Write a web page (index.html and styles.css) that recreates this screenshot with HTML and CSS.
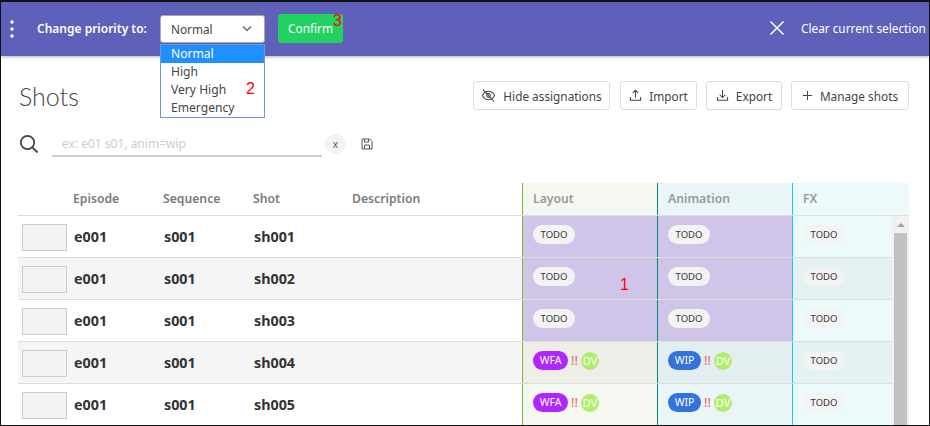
FILE: index.html
```html
<!DOCTYPE html>
<html lang="en">
<head>
  <meta charset="UTF-8">
  <title>Shots</title>
  <link rel="stylesheet" href="styles.css">
</head>
<body>
<div class="page">

  <div class="action-bar">
    <svg class="dots" width="6" height="20" viewBox="0 0 6 20"><circle cx="3" cy="3" r="1.7"/><circle cx="3" cy="10" r="1.7"/><circle cx="3" cy="17" r="1.7"/></svg>
    <strong class="bar-label">Change priority to:</strong>
    <div class="select">
      <span>Normal</span>
      <svg width="10" height="7" viewBox="0 0 10 7"><path d="M1 1.500 5 5.500l4-4" fill="none" stroke="#555" stroke-width="1.100"/></svg>
    </div>
    <div class="confirm">Confirm</div>
    <svg class="close-icon" width="16" height="16" viewBox="0 0 16 16"><path d="M1.500 1.500l13 13M14.500 1.500l-13 13" stroke="#fff" stroke-width="1.500" fill="none"/></svg>
    <span class="clear">Clear current selection</span>
  </div>

  <ul class="options">
    <li class="selected">Normal</li>
    <li>High</li>
    <li>Very High</li>
    <li>Emergency</li>
  </ul>

  <div class="mark mark-3">3</div>
  <div class="mark mark-2">2</div>
  <div class="mark mark-1">1</div>

  <div class="content">
    <div class="title-row">
      <h1>Shots</h1>
      <div class="btn-group">
        <div class="btn btn-hide">
          <svg width="15" height="15" viewBox="0 0 16 16" fill="none" stroke="#444" stroke-width="1.100"><path d="M1.500 8S4 3.500 8 3.500 14.500 8 14.500 8 12 12.500 8 12.500 1.500 8 1.500 8z"/><circle cx="8" cy="8" r="2"/><path d="M2 1.500l12 13"/></svg>
          Hide assignations
        </div>
        <div class="btn btn-import">
          <svg width="13" height="13" viewBox="0 0 14 14" fill="none" stroke="#444" stroke-width="1.100"><path d="M7 9.500V1.500M4 4.200l3-3 3 3M1.500 8.500v3.500h11V8.500"/></svg>
          Import
        </div>
        <div class="btn btn-export">
          <svg width="13" height="13" viewBox="0 0 14 14" fill="none" stroke="#444" stroke-width="1.100"><path d="M7 1v8M4 6.200l3 3 3-3M1.500 8.500v3.500h11V8.500"/></svg>
          Export
        </div>
        <div class="btn btn-manage">
          <svg width="11" height="11" viewBox="0 0 12 12" fill="none" stroke="#444" stroke-width="1.100"><path d="M6 1v10M1 6h10"/></svg>
          Manage shots
        </div>
      </div>
    </div>

    <div class="search-row">
      <svg class="search-icon" width="20" height="20" viewBox="0 0 20 20" fill="none" stroke="#444" stroke-width="1.800"><circle cx="8.500" cy="8.500" r="6.700"/><path d="M13.500 13.500l5 5"/></svg>
      <div class="search-input">ex: e01 s01, anim=wip</div>
      <div class="search-clear">x</div>
      <svg class="save-icon" width="12" height="12" viewBox="0 0 12 12" fill="none" stroke="#555" stroke-width="1"><path d="M1 1h7.500L11 3.500V11H1zM3.500 1v3h4V1M3.500 11V7h5v4"/></svg>
    </div>

    <div class="table">
      <div class="table-head">
        <div class="col-thumb"></div>
        <div class="col-episode">Episode</div>
        <div class="col-sequence">Sequence</div>
        <div class="col-shot">Shot</div>
        <div class="col-desc">Description</div>
        <div class="col-layout">Layout</div>
        <div class="col-anim">Animation</div>
        <div class="col-fx">FX</div>
      </div>

      <div class="table-body">
        <div class="rows">
          <div class="row">
            <div class="col-thumb"><div class="thumb"></div></div>
            <div class="col-episode">e001</div>
            <div class="col-sequence">s001</div>
            <div class="col-shot">sh001</div>
            <div class="col-desc"></div>
            <div class="col-layout picked"><span class="status">TODO</span></div>
            <div class="col-anim picked"><span class="status">TODO</span></div>
            <div class="col-fx"><span class="status">TODO</span></div>
          </div>
          <div class="row">
            <div class="col-thumb"><div class="thumb"></div></div>
            <div class="col-episode">e001</div>
            <div class="col-sequence">s001</div>
            <div class="col-shot">sh002</div>
            <div class="col-desc"></div>
            <div class="col-layout picked"><span class="status">TODO</span></div>
            <div class="col-anim picked"><span class="status">TODO</span></div>
            <div class="col-fx"><span class="status">TODO</span></div>
          </div>
          <div class="row">
            <div class="col-thumb"><div class="thumb"></div></div>
            <div class="col-episode">e001</div>
            <div class="col-sequence">s001</div>
            <div class="col-shot">sh003</div>
            <div class="col-desc"></div>
            <div class="col-layout picked"><span class="status">TODO</span></div>
            <div class="col-anim picked"><span class="status">TODO</span></div>
            <div class="col-fx"><span class="status">TODO</span></div>
          </div>
          <div class="row">
            <div class="col-thumb"><div class="thumb"></div></div>
            <div class="col-episode">e001</div>
            <div class="col-sequence">s001</div>
            <div class="col-shot">sh004</div>
            <div class="col-desc"></div>
            <div class="col-layout"><span class="status wfa">WFA</span><span class="prio">!!</span><span class="avatar">DV</span></div>
            <div class="col-anim"><span class="status wip">WIP</span><span class="prio">!!</span><span class="avatar">DV</span></div>
            <div class="col-fx"><span class="status">TODO</span></div>
          </div>
          <div class="row">
            <div class="col-thumb"><div class="thumb"></div></div>
            <div class="col-episode">e001</div>
            <div class="col-sequence">s001</div>
            <div class="col-shot">sh005</div>
            <div class="col-desc"></div>
            <div class="col-layout"><span class="status wfa">WFA</span><span class="prio">!!</span><span class="avatar">DV</span></div>
            <div class="col-anim"><span class="status wip">WIP</span><span class="prio">!!</span><span class="avatar">DV</span></div>
            <div class="col-fx"><span class="status">TODO</span></div>
          </div>
        </div>
        <div class="scrollbar">
          <div class="scroll-arrow"></div>
          <div class="scroll-thumb"></div>
        </div>
      </div>
    </div>
  </div>

</div>
</body>
</html>
```

FILE: styles.css
```css
* {
  box-sizing: border-box;
}

body {
  margin: 0;
  font-family: "Noto Sans", Arial, sans-serif;
  color: #333;
  background-color: #fff;
}

.page {
  position: relative;
  width: 930px;
  height: 426px;
  overflow: hidden;
  border: 1px solid #111;
  border-top-width: 2px;
}

/* top action bar */
.action-bar {
  display: flex;
  align-items: center;
  height: 54px;
  padding-left: 8px;
  background-color: #5e60ba;
  box-shadow: 0 1px 3px rgba(0, 0, 0, 0.3);
  color: #fff;
  font-size: 11.800px;
}

.action-bar > * {
  flex-shrink: 0;
}

.dots {
  fill: #fff;
  margin-top: -1px;
}

.bar-label {
  width: 123px;
  margin-left: 22px;
  margin-top: -2px;
  font-size: 12px;
  font-weight: 600;
  white-space: nowrap;
}

.select {
  display: flex;
  align-items: center;
  justify-content: space-between;
  width: 105px;
  height: 28px;
  margin-top: -1px;
  padding: 0 12px 0 10px;
  background-color: #fff;
  border: 1px solid #aaa;
  border-radius: 3px;
  color: #444;
}

.confirm {
  width: 65px;
  height: 29px;
  margin-left: 13px;
  margin-top: -2px;
  line-height: 29px;
  text-align: center;
  background-color: #22d160;
  border-radius: 3px;
}

.close-icon {
  margin-left: 426px;
  margin-top: -3px;
}

.clear {
  margin-left: 16px;
  white-space: nowrap;
  margin-top: -3px;
}

.options {
  position: absolute;
  left: 159px;
  top: 42px;
  width: 105px;
  margin: 0;
  padding: 0;
  list-style: none;
  background-color: #fff;
  border: 1px solid #7096d8;
  font-size: 12.100px;
  line-height: 18px;
  color: #444;
  z-index: 2;
}

.options li {
  padding-left: 10px;
}

.options .selected {
  background-color: #1e90ff;
  color: #fff;
}

/* red numbers drawn on top of the screenshot */
.mark {
  position: absolute;
  color: #f00;
  font-family: "Liberation Sans", Arial, sans-serif;
  font-size: 16px;
  line-height: 18px;
  z-index: 3;
}

.mark-1 { left: 619px; top: 274px; }
.mark-2 { left: 245px; top: 78px; }
.mark-3 { left: 332px; top: 10px; }

/* main content */
.content {
  padding: 0 20px 0 17px;
}

.title-row {
  display: flex;
  align-items: flex-start;
  justify-content: space-between;
  padding-top: 25px;
  height: 77px;
}

h1 {
  margin: 0 0 0 1px;
  font-family: Lato, sans-serif;
  font-size: 25px;
  font-weight: 300;
  line-height: 30px;
  color: #444;
}

.btn-group {
  display: flex;
  gap: 9px;
}

.btn {
  display: flex;
  align-items: center;
  justify-content: center;
  gap: 7px;
  height: 29px;
  background-color: #fff;
  border: 1px solid #ddd;
  border-radius: 3px;
  font-size: 11.800px;
  color: #444;
  white-space: nowrap;
}

.btn-hide { width: 137px; }
.btn-import { width: 77px; margin-left: 1px; }
.btn-export { width: 76px; }
.btn-manage { width: 118px; }

.search-row {
  display: flex;
  align-items: center;
  height: 24px;
}

.search-icon {
  margin-left: 1px;
  margin-top: -3px;
}

.search-input {
  width: 270px;
  height: 24px;
  margin-left: 13px;
  padding-left: 10px;
  border-bottom: 2px solid #ccc;
  font-size: 12px;
  line-height: 21px;
  color: #ccc;
}

.search-clear {
  width: 21px;
  height: 20px;
  margin-left: 3px;
  margin-top: -3px;
  border-radius: 50%;
  background-color: #f3f3f3;
  text-align: center;
  font-size: 10px;
  line-height: 20px;
  color: #555;
}

.save-icon {
  margin-left: 15px;
  margin-top: -3px;
}

/* table */
.table {
  margin-top: 26px;
}

.table-head,
.row {
  display: flex;
}

.table-head {
  height: 33px;
  border-bottom: 1px solid #ddd;
  font-size: 12.200px;
  font-weight: 600;
  line-height: 32px;
  color: #7a7a7a;
}

.col-thumb { width: 55px; }
.col-episode { width: 90px; }
.col-sequence { width: 90px; }
.col-shot { width: 99px; }
.col-desc { width: 170px; }

.col-layout,
.col-anim,
.col-fx {
  padding-left: 10px;
  border-left: 1px solid;
}

.col-layout {
  width: 135px;
  border-left-color: #7cb83c;
  background-color: #f5f8f0;
}

.col-anim {
  width: 135px;
  border-left-color: #00897b;
  background-color: #e9f5f6;
}

.col-fx {
  width: 117px;
  border-left-color: #1ec8e0;
  background-color: #edfafc;
}

.table-head .col-layout,
.table-head .col-anim,
.table-head .col-fx {
  color: #999;
}

.table-body {
  display: flex;
}

.rows {
  width: 874px;
}

.row {
  height: 42px;
  border-bottom: 1px solid #ddd;
  font-size: 14.300px;
  font-weight: 700;
  line-height: 41px;
  color: #333;
}

.row:nth-child(even) {
  background-color: #f5f5f5;
}

.row .col-fx {
  width: 100px;
}

.row:nth-child(even) .col-layout { background-color: #eceee7; }
.row:nth-child(even) .col-anim { background-color: #e2eeef; }
.row:nth-child(even) .col-fx { background-color: #e5f2f3; }

.row .picked,
.row:nth-child(even) .picked {
  background-color: #d0c4e8;
}

.row .col-episode,
.row .col-sequence,
.row .col-shot {
  padding-left: 1px;
}

.col-thumb {
  padding-left: 4px;
}

.thumb {
  width: 45px;
  height: 27px;
  margin-top: 8px;
  background-color: #f3f3f3;
  border: 1px solid #ccc;
}

.row .col-layout,
.row .col-anim,
.row .col-fx {
  display: flex;
  align-items: center;
  padding-bottom: 4px;
  font-weight: 400;
}

.status {
  width: 42px;
  height: 19px;
  border-radius: 10px;
  background-color: #f3f3f3;
  text-align: center;
  font-size: 9.500px;
  line-height: 19px;
  color: #333;
}

.status.wfa {
  width: 35px;
  background-color: #b026ff;
  font-size: 10.500px;
  color: #fff;
}

.status.wip {
  width: 33px;
  background-color: #3273dc;
  font-size: 10.500px;
  color: #fff;
}

.prio {
  width: 13px;
  text-align: center;
  font-size: 13px;
  font-weight: 400;
  line-height: 19px;
  color: #f55;
}

.avatar {
  width: 18px;
  height: 18px;
  border-radius: 50%;
  background-color: #b0ed6c;
  text-align: center;
  font-size: 11px;
  line-height: 18px;
  color: #fff;
}

.scrollbar {
  width: 17px;
  background-color: #f1f1f1;
  padding: 0 2px;
}

.scroll-arrow {
  width: 0;
  height: 0;
  margin: 7px auto 6px;
  border-left: 4px solid transparent;
  border-right: 4px solid transparent;
  border-bottom: 4px solid #a3a3a3;
}

.scroll-thumb {
  height: 300px;
  background-color: #c1c1c1;
}
```
